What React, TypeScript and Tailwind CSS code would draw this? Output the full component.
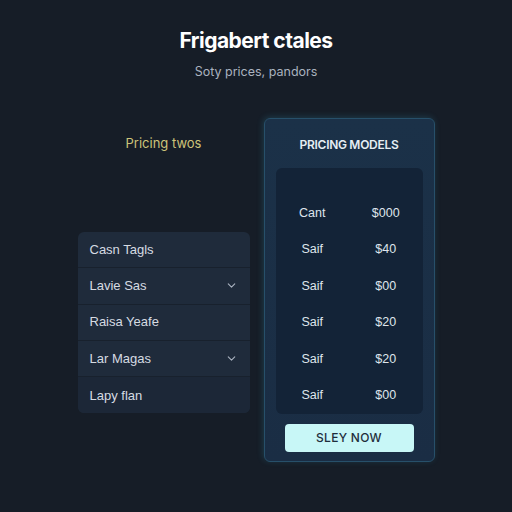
import { ChevronDown } from "lucide-react";

const listRows = [
  { label: "Casn Tagls", chevron: false },
  { label: "Lavie Sas", chevron: true },
  { label: "Raisa Yeafe", chevron: false },
  { label: "Lar Magas", chevron: true },
  { label: "Lapy flan", chevron: false },
];

const prices = [
  ["Cant", "$000"],
  ["Saif", "$40"],
  ["Saif", "$00"],
  ["Saif", "$20"],
  ["Saif", "$20"],
  ["Saif", "$00"],
];

export default function App() {
  return (
    <div
      className="w-[512px] h-[512px] bg-[#161d27] flex flex-col items-center overflow-hidden"
      style={{ fontFamily: "Inter, 'Liberation Sans', sans-serif" }}
    >
      <h1 className="mt-[27px] text-[21px] leading-[28px] font-bold text-white tracking-tight">
        Frigabert ctales
      </h1>
      <p className="mt-[8px] text-[12.5px] leading-[18px] text-[#aab2bf]">
        Soty prices, pandors
      </p>

      <div className="mt-[37px] flex gap-[14px]">
        {/* left column */}
        <div className="w-[172px] flex flex-col items-center">
          <div className="mt-[16px] text-[13px] leading-[18px] text-[#cdc47a]">Pricing twos</div>
          <div
            className="mt-[80px] w-full rounded-md bg-[#1f2b3b] overflow-hidden"
            style={{ fontFamily: "'Liberation Sans', Arial, sans-serif" }}
          >
            {listRows.map((r, i) => (
              <div
                key={r.label}
                className={`h-[36.3px] flex items-center justify-between px-3 text-[13px] text-[#d6dbe2] ${
                  i < listRows.length - 1 ? "border-b border-[#18212d]" : "bg-[#1c2737]"
                }`}
              >
                <span>{r.label}</span>
                {r.chevron && <ChevronDown size={13} className="text-[#aab3c0]" />}
              </div>
            ))}
          </div>
        </div>

        {/* right card */}
        <div className="w-[171px] h-[344px] rounded-md border border-[#27506a] bg-gradient-to-b from-[#1b3148] to-[#1a2d44] shadow-[-1px_-1px_6px_rgba(60,170,200,0.22)] flex flex-col items-center px-[11px]">
          <div className="mt-[18px] text-[12px] leading-[16px] font-semibold text-[#e6eef4] tracking-tight">
            PRICING MODELS
          </div>
          <div
            className="mt-[15px] w-full rounded-md bg-[#132337] pt-[27px]"
            style={{ fontFamily: "'Liberation Sans', Arial, sans-serif" }}
          >
            {prices.map(([a, b], i) => (
              <div key={i} className="grid grid-cols-2 h-[36.5px] items-center text-center text-[12.5px] text-[#dfe5ec]">
                <span>{a}</span>
                <span>{b}</span>
              </div>
            ))}
          </div>
          <button className="mt-[10px] w-[129px] h-[28px] rounded bg-[#c8f7f7] text-[#1f2e3c] text-[12px] font-medium tracking-wide">
            SLEY NOW
          </button>
        </div>
      </div>
    </div>
  );
}
